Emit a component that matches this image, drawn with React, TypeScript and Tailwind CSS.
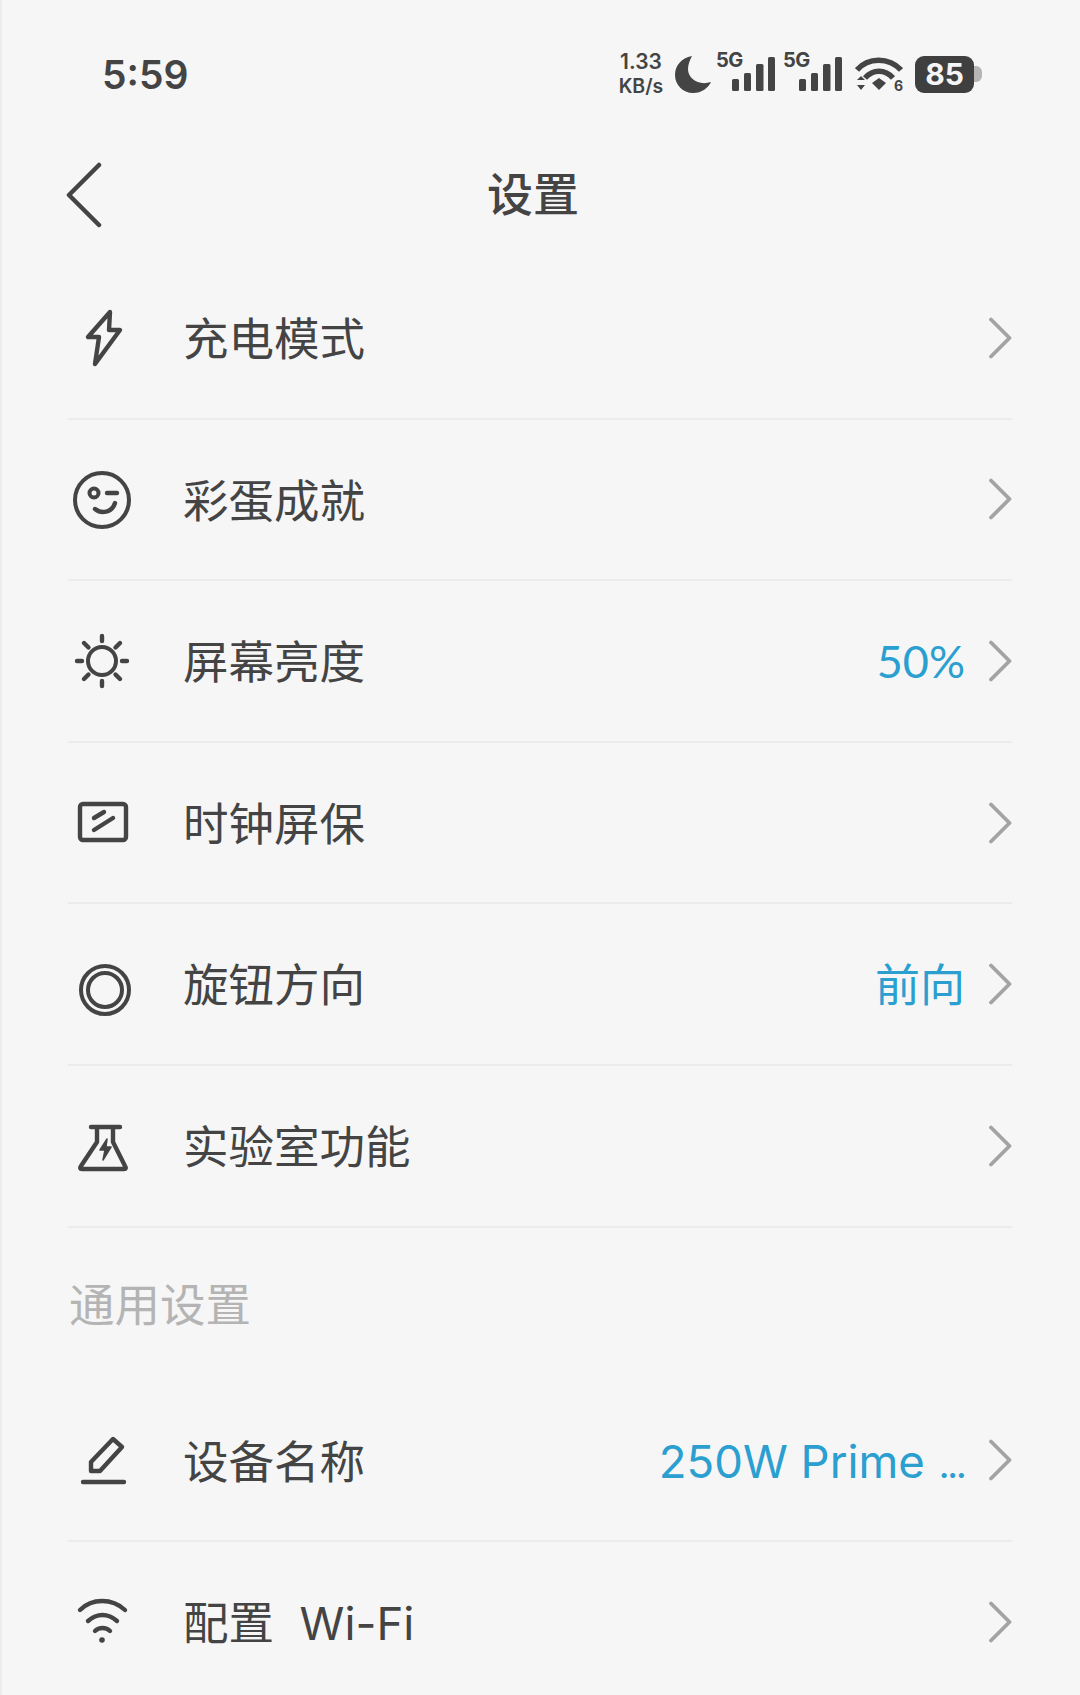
import React from 'react';

const Chevron = () => (
  <svg className="h-[44px] w-[24px] shrink-0" viewBox="0 0 24 44" fill="none" stroke="#a3a3a3" strokeWidth="3.800" strokeLinecap="round" strokeLinejoin="round">
    <path d="M3 3.500 L21.500 22 L3 40.500" />
  </svg>
);

const iconProps = {
  fill: 'none',
  stroke: '#444444',
  strokeWidth: 4,
  strokeLinecap: 'round' as const,
  strokeLinejoin: 'round' as const,
  viewBox: '0 0 64 64',
  className: 'h-16 w-16',
};

const BoltIcon = () => (
  <svg {...iconProps}>
    <path d="M40 6 L18 31 L29 31 L25 58 L50 24 L39 24 Z" strokeWidth="4.400" />
  </svg>
);

const WinkIcon = () => (
  <svg {...iconProps}>
    <circle cx="32" cy="33" r="27" />
    <circle cx="24" cy="26" r="4.500" />
    <path d="M37 26 H47" strokeWidth="4.400" />
    <path d="M25 42 C31 47 42 46 45 36" strokeWidth="4.400" />
  </svg>
);

const SunIcon = () => (
  <svg {...iconProps}>
    <circle cx="32" cy="32" r="14" />
    <path d="M32 7 V12 M32 52 V57 M7 32 H12 M52 32 H57 M14 14 L18.500 18.500 M50 14 L45.500 18.500 M14 50 L18.500 45.500 M50 50 L45.500 45.500" strokeWidth="4.400" />
  </svg>
);

const ScreenIcon = () => (
  <svg {...iconProps}>
    <rect x="10" y="13" width="46" height="36" rx="3" strokeWidth="4.400" />
    <path d="M24 27 L34 21 M24 39 L43 27" strokeWidth="4.400" />
  </svg>
);

const KnobIcon = () => (
  <svg {...iconProps}>
    <circle cx="35" cy="38" r="24" />
    <circle cx="35" cy="38" r="17" />
  </svg>
);

const FlaskIcon = () => (
  <svg {...iconProps}>
    <path d="M21 13 H50 M27 14 V28 L11 52 Q9 55 12 55 H54 Q57 55 55 52 L43 28 V14" strokeWidth="4.400" />
    <path d="M37 25 L30 36 H35 L33 46 L41 33 H36 Z" fill="#444444" strokeWidth="1.500" />
  </svg>
);

const PenIcon = () => (
  <svg {...iconProps}>
    <path d="M43 11 L52 19 L30 43 H21 V34 Z" strokeWidth="4.400" />
    <path d="M13 54 H54" strokeWidth="4.400" />
  </svg>
);

const WifiIcon = () => (
  <svg {...iconProps}>
    <path d="M10 20 C22 8 42 8 55 20" strokeWidth="4.400" />
    <path d="M18 31 C27 23 38 23 47 31" strokeWidth="4.400" />
    <path d="M25 41 C29 37 36 37 40 41" strokeWidth="4.400" />
    <circle cx="32" cy="50" r="2.800" fill="#444444" stroke="none" />
  </svg>
);

const SignalGroup = () => (
  <div className="relative h-[38px] w-[58px]">
    <span className="absolute left-[-1px] top-[-5px] text-[20px] leading-[20px] font-bold tracking-[-0.5px] text-[#444444]">5G</span>
    <svg className="absolute left-[15px] top-0 h-[38px] w-[43px]" viewBox="0 0 43 38" fill="#444444">
      <rect x="0" y="24" width="7" height="12" rx="1.500" />
      <rect x="12" y="18" width="7" height="18" rx="1.500" />
      <rect x="24" y="9" width="7.500" height="27" rx="1.500" />
      <rect x="36" y="2" width="7" height="34" rx="1.500" />
    </svg>
  </div>
);

const StatusBar = () => (
  <div className="flex h-[146px] items-center justify-between pl-[100px] pr-[98px] pt-[2px]">
    <span className="text-[39px] leading-none font-semibold text-[#444444]">5:59</span>
    <div className="flex items-center text-[#444444]">
      <div className="flex w-[50px] flex-col items-center text-[21px] font-semibold leading-[25px]">
        <span>1.33</span>
        <span className="text-[19.500px]">KB/s</span>
      </div>
      <svg className="ml-[9px] h-[38px] w-[37px]" viewBox="0 0 37 38" fill="#444444">
        <path d="M17 1 C6 3 0 11 0 20 C0 30 8 38 18 38 C27 38 33 33 36 27 C24 31 13 24 13 14 C13 9 15 5 17 1 Z" />
      </svg>
      <div className="ml-[5px]"><SignalGroup /></div>
      <div className="ml-[9px]"><SignalGroup /></div>
      <div className="relative ml-[13px] h-[36px] w-[48px]">
        <svg className="h-[36px] w-[48px]" viewBox="0 0 48 36" fill="none">
          <path d="M2 14 C13 1 34 1 46 14" stroke="#444444" strokeWidth="5.500" />
          <path d="M10 22 C18 13 30 13 38 22" stroke="#444444" strokeWidth="5.500" />
          <path d="M17 27 L24 22 L31 27 L24 34 Z" fill="#444444" />
          <path d="M2 24 L6 20 L10 24 Z M2 29 L10 29 L6 34 Z" fill="#444444" />
        </svg>
        <span className="absolute right-0 bottom-[-1px] text-[14px] leading-none font-bold">6</span>
      </div>
      <div className="ml-[12px] flex items-center">
        <div className="flex h-[37px] w-[59px] items-center justify-center rounded-[9px] bg-[#3f3f3f] text-[30px] font-bold leading-none text-[#f5f5f5]">85</div>
        <div className="h-[16px] w-[8px] rounded-r-[6px] bg-[#b5b5b5]" />
      </div>
    </div>
  </div>
);

const Row = ({ icon, label, value }: { icon: React.ReactNode; label: string; value?: React.ReactNode }) => (
  <div className="flex h-[161.600px] items-center justify-between border-b-2 border-[#ececec]">
    <div className="flex items-center">
      <div className="ml-[2px] mr-[49px] flex h-16 w-16 items-center justify-center">{icon}</div>
      <span className="whitespace-pre pt-[4px] text-[45.500px] leading-none text-[#444444]">{label}</span>
    </div>
    <div className="flex items-center">
      {value && <div className="mr-[23px] flex items-baseline pt-[2px] leading-none text-[#2a9fd0]">{value}</div>}
      <Chevron />
    </div>
  </div>
);

const App: React.FC = () => {
  return (
    <div className="h-[1695px] w-[1080px] overflow-hidden border-l-2 border-[#ececec] bg-[#f6f6f6] font-['Inter','Noto_Sans_CJK_SC',sans-serif]">
      <StatusBar />

      {/* Header */}
      <div className="relative flex h-[96px] items-center justify-center pr-[16px]">
        <svg className="absolute left-[62px] top-[16px] h-[66px] w-[40px]" viewBox="0 0 40 66" fill="none" stroke="#444444" strokeWidth="4.500" strokeLinecap="round" strokeLinejoin="round">
          <path d="M35 3 L5 33 L35 63" />
        </svg>
        <span className="text-[46px] leading-none font-medium text-[#444444]">设置</span>
      </div>

      <div className="ml-[66px] mr-[68px] mt-[16px]">
        <Row icon={<BoltIcon />} label="充电模式" />
        <Row icon={<WinkIcon />} label="彩蛋成就" />
        <Row icon={<SunIcon />} label="屏幕亮度" value={<span className="font-['Lato'] text-[45px]">50%</span>} />
        <Row icon={<ScreenIcon />} label="时钟屏保" />
        <Row icon={<KnobIcon />} label="旋钮方向" value={<span className="text-[45px]">前向</span>} />
        <Row icon={<FlaskIcon />} label="实验室功能" />

        <div className="flex h-[153px] items-center pl-[1px] pt-[4px] text-[45.500px] leading-none text-[#b4b4b4]">通用设置</div>

        <Row
          icon={<PenIcon />}
          label="设备名称"
          value={
            <>
              <span className="text-[45.500px]">250W Prime</span>
              <span className="ml-[14px] text-[32px] font-semibold tracking-[-1.500px]">...</span>
            </>
          }
        />
        <Row icon={<WifiIcon />} label="配置  Wi-Fi" />
      </div>
    </div>
  );
};

export default App;
